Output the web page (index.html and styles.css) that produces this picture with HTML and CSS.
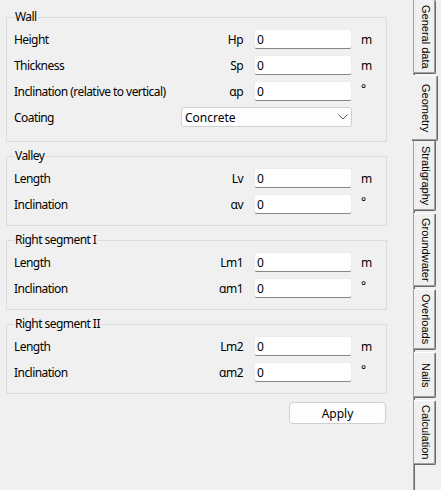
FILE: index.html
```html
<!DOCTYPE html>
<html lang="en">
<head>
  <meta charset="UTF-8">
  <title>Geometry</title>
  <link rel="stylesheet" href="styles.css">
</head>
<body>
  <div class="window">
    <div class="page">
      <fieldset class="group group-wall">
        <legend>Wall</legend>
        <div class="rows">
          <span class="label">Height</span><span class="sym">Hp</span><input class="field" type="text" value="0"><span class="unit">m</span>
          <span class="label">Thickness</span><span class="sym">Sp</span><input class="field" type="text" value="0"><span class="unit">m</span>
          <span class="label">Inclination (relative to vertical)</span><span class="sym">αp</span><input class="field" type="text" value="0"><span class="unit deg">°</span>
          <span class="label">Coating</span>
          <div class="combo">
            <select>
              <option>Concrete</option>
            </select>
            <svg class="chevron" width="10" height="6" viewBox="0 0 10 6"><path d="M0.5 0.5 L5 5 L9.5 0.5" fill="none" stroke="#5c5c5c" stroke-width="1"/></svg>
          </div>
        </div>
      </fieldset>

      <fieldset class="group">
        <legend>Valley</legend>
        <div class="rows">
          <span class="label">Length</span><span class="sym">Lv</span><input class="field" type="text" value="0"><span class="unit">m</span>
          <span class="label">Inclination</span><span class="sym">αv</span><input class="field" type="text" value="0"><span class="unit deg">°</span>
        </div>
      </fieldset>

      <fieldset class="group">
        <legend>Right segment I</legend>
        <div class="rows">
          <span class="label">Length</span><span class="sym">Lm1</span><input class="field" type="text" value="0"><span class="unit">m</span>
          <span class="label">Inclination</span><span class="sym">αm1</span><input class="field" type="text" value="0"><span class="unit deg">°</span>
        </div>
      </fieldset>

      <fieldset class="group">
        <legend>Right segment II</legend>
        <div class="rows">
          <span class="label">Length</span><span class="sym">Lm2</span><input class="field" type="text" value="0"><span class="unit">m</span>
          <span class="label">Inclination</span><span class="sym">αm2</span><input class="field" type="text" value="0"><span class="unit deg">°</span>
        </div>
      </fieldset>

      <div class="actions">
        <button class="btn" type="button">Apply</button>
      </div>
    </div>

    <div class="tabs">
      <div class="tab tab-general">General data</div>
      <div class="tab tab-geometry active">Geometry</div>
      <div class="tab tab-strat">Stratigraphy</div>
      <div class="tab tab-water">Groundwater</div>
      <div class="tab tab-loads">Overloads</div>
      <div class="tab tab-nails">Nails</div>
      <div class="tab tab-calc">Calculation</div>
    </div>
  </div>
</body>
</html>
```

FILE: styles.css
```css
* { margin: 0; padding: 0; box-sizing: border-box; }

body {
  font-family: "Noto Sans", "Open Sans", sans-serif;
  font-size: 12px;
  letter-spacing: -0.55px;
  color: #000;
  background: #f0f0f0;
  width: 441px;
  height: 490px;
  overflow: hidden;
}

.window {
  display: flex;
  height: 490px;
}

/* left side: the property page */
.page {
  width: 413px;
  flex: none;
  padding: 9px 26px 0 6px;
}

.group {
  border: 1px solid #dcdcdc;
  padding: 1px 7px 8px 7px;
  margin-bottom: 6px;
}
.group-wall {
  padding-bottom: 11px;
}

.group legend {
  line-height: 16px;
  padding: 0 1px;
}

.rows {
  display: grid;
  grid-template-columns: 1fr 73px 98px 27px;
  grid-auto-rows: 26px;
  align-items: center;
}

.label {
  white-space: nowrap;
}

.sym {
  text-align: right;
  padding-right: 11px;
}

.unit {
  padding-left: 9px;
}
.unit.deg {
  align-self: start;
  padding-top: 2px;
}

.field {
  height: 20px;
  width: 98px;
  background: #fff;
  border: 1px solid #ececec;
  border-bottom-color: #868686;
  border-radius: 3px;
  padding: 0 0 0 2px;
  font: inherit;
  color: #000;
  outline: none;
}

.combo {
  grid-column: 2 / 4;
  position: relative;
  height: 20px;
}
.combo select {
  appearance: none;
  width: 100%;
  height: 20px;
  background: #fdfdfd;
  border: 1px solid #d0d0d0;
  border-radius: 3px;
  padding: 0 0 0 3px;
  font: inherit;
  color: #000;
}
.chevron {
  position: absolute;
  right: 4px;
  top: 7px;
  pointer-events: none;
}

.actions {
  display: flex;
  justify-content: flex-end;
  padding-top: 2px;
  padding-right: 1px;
}

.btn {
  width: 97px;
  height: 22px;
  background: #fdfdfd;
  border: 1px solid #d0d0d0;
  border-radius: 4px;
  font: inherit;
  color: #000;
}

/* right side: vertical tab strip */
.tabs {
  width: 28px;
  flex: none;
  height: 490px;
  border-left: 1px solid #a0a0a0;
  box-shadow: inset 1px 0 #696969;
  font-family: "Liberation Sans", Arial, sans-serif;
  font-size: 11px;
  letter-spacing: 0;
}

.tab {
  writing-mode: vertical-rl;
  white-space: nowrap;
  width: 22px;
  margin-bottom: 2px;
  text-align: center;
  line-height: 19px;
  background: #f0f0f0;
  border-top: 1px solid #fff;
  border-right: 1px solid #696969;
  border-bottom: 1px solid #696969;
  border-radius: 0 2px 2px 0;
  box-shadow: inset -1px -1px #a0a0a0;
}
.tab:first-child {
  border-top: none;
}

.tab-general { height: 74px; }
.tab-strat { height: 71px; }
.tab-water { height: 74px; }
.tab-loads { height: 61px; }
.tab-nails { height: 46px; }
.tab-calc { height: 65px; }

.tab.active {
  position: relative;
  width: 26px;
  height: 66px;
  margin: -1px 0 -1px -2px;
  padding-left: 2px;
  line-height: 22px;
}
```
